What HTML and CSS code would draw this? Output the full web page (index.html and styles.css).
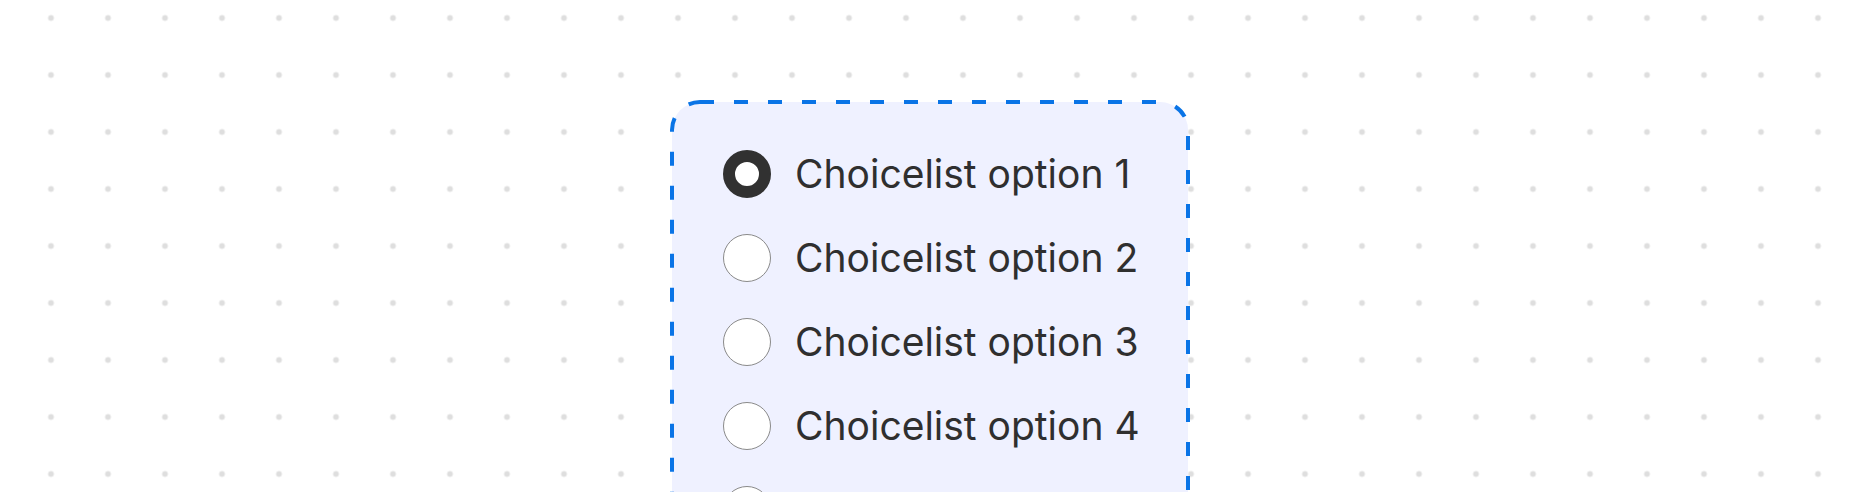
FILE: index.html
```html
<!DOCTYPE html>
<html lang="en">
<head>
  <meta charset="UTF-8">
  <meta name="viewport" content="width=device-width, initial-scale=1.0">
  <title>Choicelist</title>
  <link rel="stylesheet" href="styles.css">
</head>
<body>
  <div class="canvas">
    <div class="choicelist">
      <svg class="choicelist-frame" width="520" height="640" viewBox="0 0 520 640">
        <rect x="2" y="2" width="516" height="636" rx="28" ry="28"></rect>
      </svg>

      <label class="choice">
        <span class="radio radio-checked"></span>
        <span class="choice-label">Choicelist option 1</span>
      </label>
      <label class="choice">
        <span class="radio"></span>
        <span class="choice-label">Choicelist option 2</span>
      </label>
      <label class="choice">
        <span class="radio"></span>
        <span class="choice-label">Choicelist option 3</span>
      </label>
      <label class="choice">
        <span class="radio"></span>
        <span class="choice-label">Choicelist option 4</span>
      </label>
      <label class="choice">
        <span class="radio"></span>
      </label>
    </div>
  </div>
</body>
</html>
```

FILE: styles.css
```css
html, body {
  margin: 0;
  padding: 0;
}
body {
  width: 1860px;
  height: 492px;
  overflow: hidden;
  background-color: #ffffff;
  font-family: Inter, 'Noto Sans', sans-serif;
}
.canvas {
  height: 492px;
  padding: 100px 0 0 670px;
  box-sizing: border-box;
  background-image: radial-gradient(circle, #dedede 2.6px, rgba(222, 222, 222, 0) 3.3px);
  background-size: 57px 57px;
  background-position: 22.5px -10.5px;
}
.choicelist {
  position: relative;
  width: 520px;
  height: 640px;
  padding: 50px 0 0 53px;
  box-sizing: border-box;
  display: flex;
  flex-direction: column;
  gap: 36px;
}
.choicelist-frame {
  position: absolute;
  top: 0;
  left: 0;
}
.choicelist-frame rect {
  fill: #eff1ff;
  stroke: #0a74e6;
  stroke-width: 4;
  stroke-dasharray: 14 20;
}
.choice {
  position: relative;
  display: flex;
  align-items: center;
  gap: 24px;
  height: 48px;
}
.radio {
  width: 48px;
  height: 48px;
  box-sizing: border-box;
  border-radius: 50%;
  border: 1.5px solid #8a8a8a;
  background-color: #ffffff;
  flex-shrink: 0;
}
.radio-checked {
  border: 12px solid #313131;
}
.choice-label {
  font-size: 39px;
  line-height: 48px;
  color: #2f2f2f;
}
```
